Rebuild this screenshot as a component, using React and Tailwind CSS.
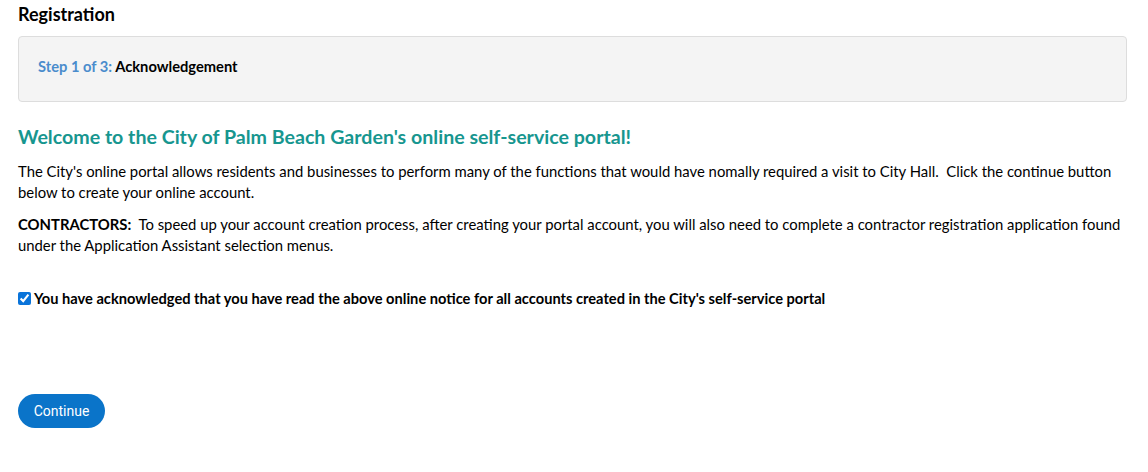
export default function App() {
  return (
    <div className="min-h-screen bg-white pl-[18px] pr-[21px] pt-[3px] text-black" style={{ fontFamily: 'Lato, "Open Sans", sans-serif' }}>
      <h2 className="text-[18px] font-bold leading-[23px]">Registration</h2>

      {/* Step box */}
      <div className="mt-[10px] h-[66px] flex items-center rounded border border-[#dddddd] bg-[#f4f4f4] px-[19px] pb-[6px]">
        <p className="text-[14.7px] font-bold">
          <span className="text-[#4a8ccc]">Step 1 of 3:</span> Acknowledgement
        </p>
      </div>

      <h1 className="mt-[21px] text-[19.6px] font-bold leading-[28px] text-[#17968f]">
        Welcome to the City of Palm Beach Garden's online self-service portal!
      </h1>

      <p className="mt-[10px] text-[14.85px] leading-[21px]">
        The City's online portal allows residents and businesses to perform many of the functions that would have nomally required a visit to City Hall.&nbsp; Click the continue button below to create your online account.
      </p>

      <p className="mt-[11px] text-[14.85px] leading-[21px]">
        <span className="font-bold">CONTRACTORS:</span>&nbsp; To speed up your account creation process, after creating your portal account, you will also need to complete a contractor registration application found under the Application Assistant selection menus.
      </p>

      <label className="mt-[32px] flex items-center gap-[3px] text-[14.65px] font-bold leading-[21px]">
        <input type="checkbox" defaultChecked className="h-[13px] w-[13px] accent-[#0a74da]" />
        You have acknowledged that you have read the above online notice for all accounts created in the City's self-service portal
      </label>

      <button
        className="mt-[85px] h-[34px] w-[87px] rounded-full bg-[#0a74c9] text-[14px] text-white"
        style={{ fontFamily: 'Roboto, Arial, sans-serif' }}
      >
        Continue
      </button>
    </div>
  );
}
